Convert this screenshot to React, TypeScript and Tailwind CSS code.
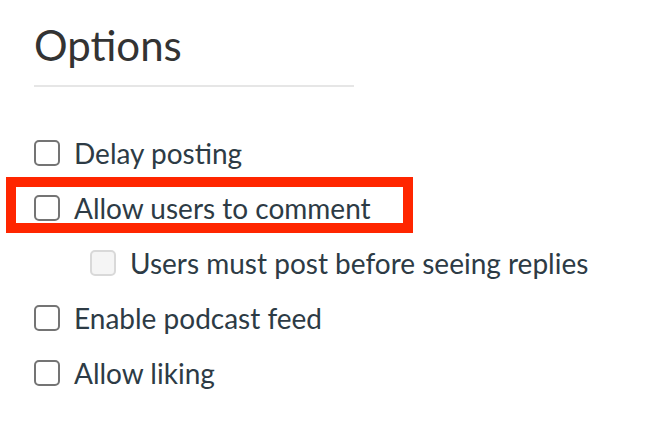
import React from 'react';

function Box({ disabled }: { disabled?: boolean }) {
  return (
    <span
      className={
        'inline-block w-[26px] h-[26px] shrink-0 rounded-[5px] border-2 ' +
        (disabled ? 'border-[#d9d9d9] bg-[#f5f5f5]' : 'border-[#747474] bg-white')
      }
    />
  );
}

function Row({ label, disabled, indent }: { label: string; disabled?: boolean; indent?: boolean }) {
  return (
    <label className={'flex items-center gap-[14px] h-[55px] ' + (indent ? 'pl-[56px]' : '')}>
      <Box disabled={disabled} />
      <span className="text-[28px] leading-[42px] text-[#2d3b45]">{label}</span>
    </label>
  );
}

export default function App() {
  return (
    <div className="relative w-[656px] h-[438px] bg-white font-['Lato',sans-serif]">
      <div className="pl-[34px] pt-[21px]">
        <h2 className="text-[42px] leading-[48px] text-[#333] font-normal">Options</h2>
        <div className="w-[320px] h-[2px] bg-[#e6e6e6] mt-[16px]" />
        <div className="mt-[38px]">
          <Row label="Delay posting" />
          <Row label="Allow users to comment" />
          <Row label="Users must post before seeing replies" disabled indent />
          <Row label="Enable podcast feed" />
          <Row label="Allow liking" />
        </div>
      </div>
      <div className="absolute left-[6px] top-[177px] w-[407px] h-[56px] border-[10px] border-[#ff2600]" />
    </div>
  );
}
